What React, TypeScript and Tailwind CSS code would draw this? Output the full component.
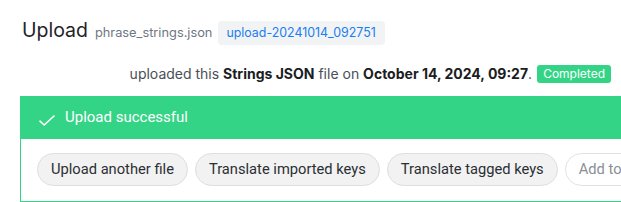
import React from "react";

export default function App() {
  const inter = { fontFamily: "Inter, 'Noto Sans', sans-serif" } as const;
  const roboto = { fontFamily: "Roboto, 'Noto Sans', sans-serif" } as const;
  return (
    <div className="w-[621px] h-[202px] overflow-hidden bg-white relative">
      <div className="flex items-baseline pl-[22px] pt-[16px]" style={inter}>
        <span className="text-[19.5px] leading-[28px] text-[#1f2328]">Upload</span>
        <span className="ml-[7px] text-[12.8px] text-[#6e7681]">phrase_strings.json</span>
        <span className="ml-[6px] rounded-[4px] bg-[#f2f3f5] pl-[8px] pr-[9px] py-[4px] text-[12.4px] leading-[16px] text-[#1a7ef0]">
          upload-20241014_092751
        </span>
      </div>
      <div className="flex items-center justify-end pr-[10px] mt-[19px] text-[14px] leading-[20px] text-[#4a4f55]" style={inter}>
        <span>
          uploaded this <b className="font-bold text-[#1a1d21]">Strings JSON</b> file on{" "}
          <b className="font-bold text-[#1a1d21]">October 14, 2024, 09:27</b>.
        </span>
        <span className="ml-[5px] rounded-[3px] bg-[#34d486] px-[6px] text-[12px] leading-[18px] text-white">
          Completed
        </span>
      </div>
      <div className="ml-[20px] mt-[12px] w-[700px] border border-[#34d486]">
        <div className="flex h-[42px] items-center bg-[#34d486] pl-[18px] text-white" style={roboto}>
          <svg width="16" height="11" viewBox="0 0 16 11" className="mt-[4px]" fill="none">
            <path d="M1 6.2 L5.2 10 L15 1" stroke="white" strokeWidth="1.6" strokeLinecap="round" strokeLinejoin="round" />
          </svg>
          <span className="ml-[10px] text-[15px] leading-[20px] -mt-[3px]">Upload successful</span>
        </div>
        <div className="flex gap-[7px] px-[16px] pt-[14px] pb-[15px]" style={roboto}>
          {["Upload another file", "Translate imported keys", "Translate tagged keys"].map((t) => (
            <div
              key={t}
              className="flex h-[33px] items-center rounded-full border border-[#dedede] bg-[#f2f2f2] px-[13px] text-[14.7px] text-[#2b2f33] whitespace-nowrap"
            >
              {t}
            </div>
          ))}
          <div className="flex h-[33px] items-center rounded-full border border-[#e2e2e2] bg-white px-[13px] text-[14.7px] text-[#8a8f94] whitespace-nowrap">
            Add to job
          </div>
        </div>
      </div>
    </div>
  );
}
